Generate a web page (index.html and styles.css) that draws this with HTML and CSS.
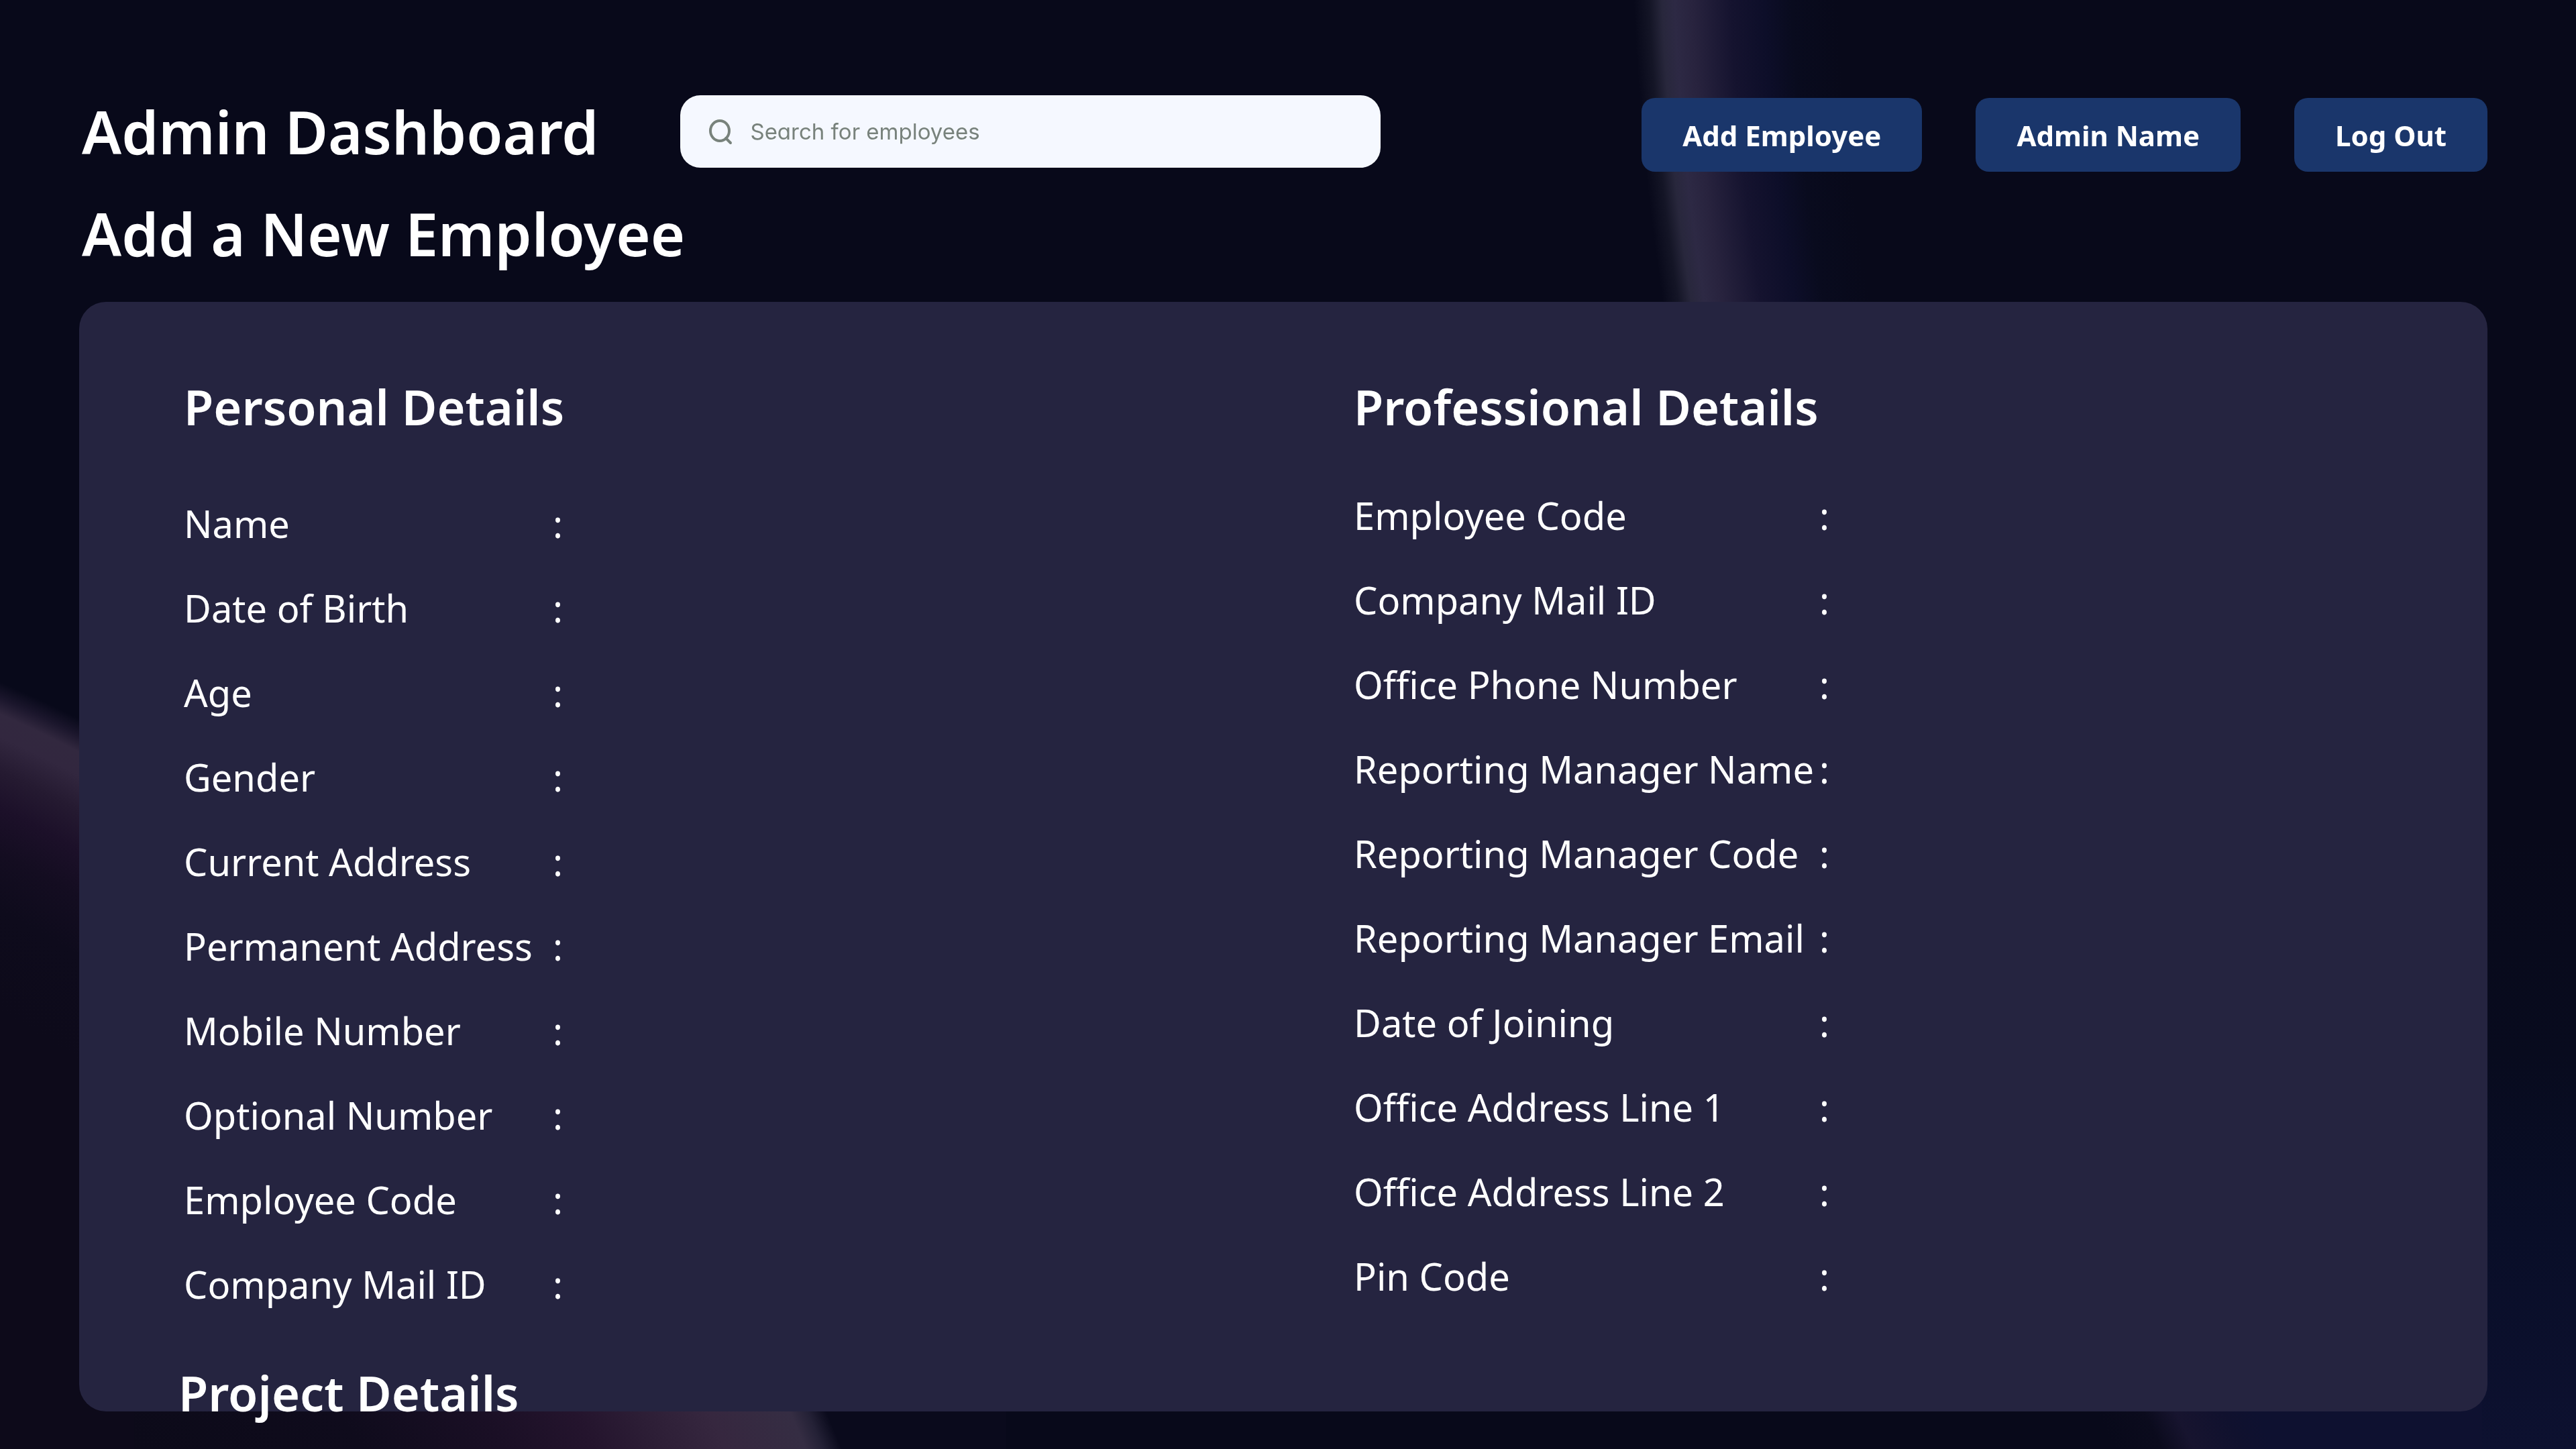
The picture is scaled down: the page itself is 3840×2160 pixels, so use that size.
FILE: index.html
```html
<!DOCTYPE html>
<html lang="en">
<head>
<meta charset="utf-8">
<title>Admin Dashboard</title>
<link rel="stylesheet" href="styles.css">
</head>
<body>
<svg class="backdrop" viewBox="0 0 3840 2160" preserveAspectRatio="none" aria-hidden="true">
  <defs>
    <radialGradient id="arc-right" gradientUnits="userSpaceOnUse" cx="6233" cy="-140" r="3800">
      <stop offset="0.92" stop-color="#08091a"/>
      <stop offset="0.938" stop-color="#090b1e"/>
      <stop offset="0.949" stop-color="#0d0e29"/>
      <stop offset="0.962" stop-color="#15132f"/>
      <stop offset="0.977" stop-color="#28233e"/>
      <stop offset="0.984" stop-color="#2d2944"/>
      <stop offset="0.989" stop-color="#28273c"/>
      <stop offset="0.994" stop-color="#141526"/>
      <stop offset="1" stop-color="#08091a"/>
    </radialGradient>
    <radialGradient id="arc-left" gradientUnits="userSpaceOnUse" cx="-876" cy="3041" r="2206">
      <stop offset="0.8" stop-color="#0d0a1a"/>
      <stop offset="0.86" stop-color="#0e0b1c"/>
      <stop offset="0.895" stop-color="#140d21"/>
      <stop offset="0.922" stop-color="#1c1029"/>
      <stop offset="0.945" stop-color="#251a31"/>
      <stop offset="0.966" stop-color="#32273f"/>
      <stop offset="0.98" stop-color="#32283f"/>
      <stop offset="0.99" stop-color="#1b162c"/>
      <stop offset="1" stop-color="#08091a"/>
    </radialGradient>
    <radialGradient id="arc-bottom" gradientUnits="userSpaceOnUse" cx="-600" cy="2892" r="1994">
      <stop offset="0.5" stop-color="#0b0a18"/>
      <stop offset="0.68" stop-color="#0f0b1c"/>
      <stop offset="0.77" stop-color="#1a0f25"/>
      <stop offset="0.83" stop-color="#24142d"/>
      <stop offset="0.87" stop-color="#2c1d35"/>
      <stop offset="0.92" stop-color="#36273f"/>
      <stop offset="0.975" stop-color="#352d43"/>
      <stop offset="0.987" stop-color="#242136"/>
      <stop offset="1" stop-color="#0a0a1c"/>
    </radialGradient>
    <linearGradient id="navy-side" x1="0" y1="0" x2="0" y2="1">
      <stop offset="0" stop-color="#08091a"/>
      <stop offset="0.35" stop-color="#080b1e"/>
      <stop offset="0.65" stop-color="#090e28"/>
      <stop offset="1" stop-color="#0d1130"/>
    </linearGradient>
    <linearGradient id="navy-bottom" gradientUnits="userSpaceOnUse" x1="3160" y1="2175" x2="3350" y2="2080">
      <stop offset="0" stop-color="#08091a"/>
      <stop offset="0.3" stop-color="#0b0b1d"/>
      <stop offset="0.5" stop-color="#17142f"/>
      <stop offset="0.8" stop-color="#10112e"/>
      <stop offset="1" stop-color="#0e1130"/>
    </linearGradient>
  </defs>
  <rect x="2300" y="0" width="600" height="1000" fill="url(#arc-right)"/>
  <rect x="0" y="900" width="300" height="1260" fill="url(#arc-left)"/>
  <rect x="200" y="2000" width="1300" height="160" fill="url(#arc-bottom)"/>
  <rect x="3600" y="1250" width="240" height="910" fill="url(#navy-side)"/>
  <rect x="3100" y="2060" width="600" height="100" fill="url(#navy-bottom)"/>
</svg>
<div class="page">
  <header class="topbar">
    <h1 class="title">Admin Dashboard</h1>
    <form class="search" role="search">
      <label class="search-label" for="search" aria-label="Search for employees">
        <svg class="search-icon" viewBox="0 0 36 36" aria-hidden="true"><ellipse cx="17" cy="17" rx="14" ry="15"/><path d="M26 28l7 7"/></svg>
      </label>
      <input class="search-input" id="search" type="text" placeholder="Search for employees">
    </form>
    <nav class="actions">
      <button class="button" type="button">Add Employee</button>
      <button class="button" type="button">Admin Name</button>
      <button class="button" type="button">Log Out</button>
    </nav>
  </header>
  <h2 class="title subtitle">Add a New Employee</h2>
  <main class="card">
    <div class="columns">
      <section class="group personal">
        <h3 class="heading">Personal Details</h3>
        <dl class="fields">
          <dt>Name</dt><dd>:</dd>
          <dt>Date of Birth</dt><dd>:</dd>
          <dt>Age</dt><dd>:</dd>
          <dt>Gender</dt><dd>:</dd>
          <dt>Current Address</dt><dd>:</dd>
          <dt>Permanent Address</dt><dd>:</dd>
          <dt>Mobile Number</dt><dd>:</dd>
          <dt>Optional Number</dt><dd>:</dd>
          <dt>Employee Code</dt><dd>:</dd>
          <dt>Company Mail ID</dt><dd>:</dd>
        </dl>
      </section>
      <section class="group professional">
        <h3 class="heading">Professional Details</h3>
        <dl class="fields">
          <dt>Employee Code</dt><dd>:</dd>
          <dt>Company Mail ID</dt><dd>:</dd>
          <dt>Office Phone Number</dt><dd>:</dd>
          <dt>Reporting Manager Name</dt><dd>:</dd>
          <dt>Reporting Manager Code</dt><dd>:</dd>
          <dt>Reporting Manager Email</dt><dd>:</dd>
          <dt>Date of Joining</dt><dd>:</dd>
          <dt>Office Address Line 1</dt><dd>:</dd>
          <dt>Office Address Line 2</dt><dd>:</dd>
          <dt>Pin Code</dt><dd>:</dd>
        </dl>
      </section>
    </div>
    <section class="project">
      <h3 class="heading">Project Details</h3>
    </section>
  </main>
</div>
</body>
</html>
```
FILE: styles.css
```css
* {
  box-sizing: border-box;
}

body {
  margin: 0;
  background: #08091a;
  color: #fff;
  font-family: "Noto Sans", sans-serif;
}

.backdrop {
  position: fixed;
  inset: 0;
  z-index: -1;
  width: 100%;
  height: 100%;
}

.page {
  display: flex;
  flex-direction: column;
  height: 100vh;
  padding: 136px 132px 56px 118px;
}

.topbar {
  display: flex;
  align-items: center;
  padding-left: 4px;
}

.title {
  margin: 0;
  font-size: 88px;
  font-weight: 600;
  line-height: 120px;
  white-space: nowrap;
}

.subtitle {
  margin: 32px 0 42px;
  padding-left: 4px;
}

.search {
  display: flex;
  align-items: center;
  flex: 0 1 1044px;
  height: 108px;
  margin-left: 122px;
  padding: 0 42px;
  border-radius: 30px;
  background: #f5f8ff;
}

.search-label {
  display: flex;
}

.search-icon {
  width: 36px;
  height: 36px;
  overflow: visible;
  fill: none;
  stroke: #78827c;
  stroke-width: 4;
  stroke-linecap: round;
}

.search-input {
  flex: 1;
  min-width: 0;
  margin-left: 26px;
  padding: 0;
  border: 0;
  outline: 0;
  background: none;
  color: #333;
  font: 400 33px/48px Inter, sans-serif;
  font-feature-settings: "cv11";
}

.search-input::placeholder {
  color: #78827c;
  opacity: 1;
}

.actions {
  display: flex;
  align-self: flex-end;
  gap: 80px;
  margin-left: auto;
}

.button {
  height: 110px;
  padding: 2px 61px 0;
  border: 0;
  border-radius: 20px;
  background: #1a366b;
  color: #fff;
  font: 700 42px/58px "Noto Sans", sans-serif;
  white-space: nowrap;
}

.card {
  flex: 1;
  min-height: 0;
  padding: 107px 156px 0;
  border-radius: 40px;
  background: #252440;
}

.columns {
  display: grid;
  grid-template-columns: 1744fr 1534fr;
}

.heading {
  margin: 0;
  font-size: 72px;
  font-weight: 600;
  line-height: 98px;
}

.fields {
  display: grid;
  row-gap: 50px;
  margin: 0;
  font-size: 56px;
  line-height: 76px;
  white-space: nowrap;
}

.fields dd {
  margin: 0;
}

.personal .fields {
  grid-template-columns: 550px 1fr;
  margin-top: 87px;
}

.professional .fields {
  grid-template-columns: 694px 1fr;
  margin-top: 75px;
}

.project {
  margin: 75px 0 0 -8px;
}
```
